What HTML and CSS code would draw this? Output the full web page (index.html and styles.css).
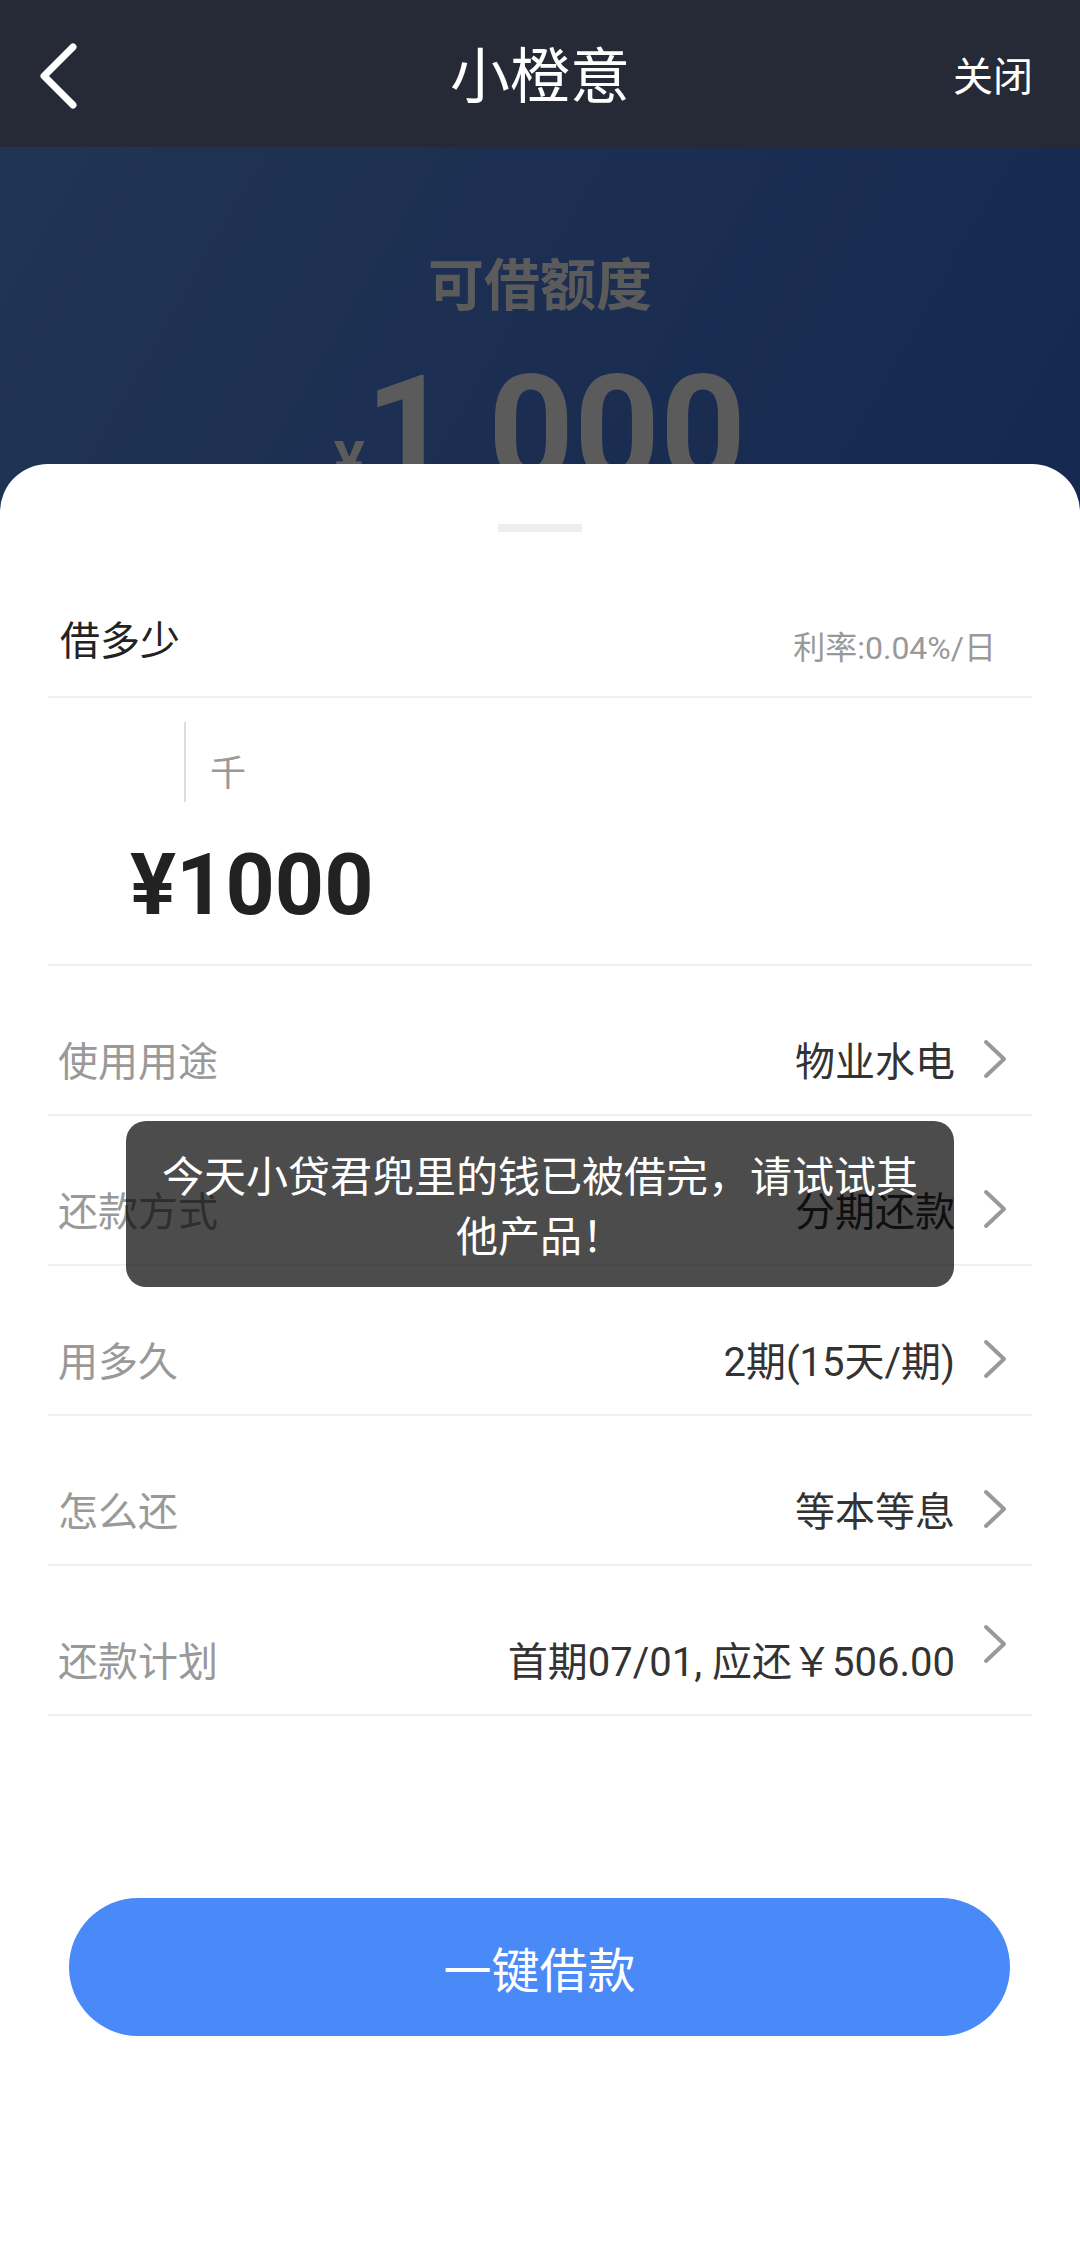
FILE: index.html
```html
<!DOCTYPE html>
<html lang="zh-CN">
<head>
<meta charset="utf-8">
<title>小橙意</title>
<link rel="stylesheet" href="styles.css">
</head>
<body>
<div class="page">
  <header class="topbar">
    <svg class="back" width="40" height="66" viewBox="0 0 40 66"><polyline points="35,4 6,33 35,62" fill="none" stroke="#ffffff" stroke-width="7" stroke-linecap="round" stroke-linejoin="round"/></svg>
    <div class="title">小橙意</div>
    <div class="close">关闭</div>
  </header>

  <section class="hero">
    <div class="hero-label">可借额度</div>
    <div class="hero-amount"><span class="hero-yen">¥</span><span class="hero-num">1,000</span></div>
  </section>

  <section class="card">
    <div class="handle"></div>
    <div class="head-row">
      <span class="head-label">借多少</span>
      <span class="rate">利率:0.04%/日</span>
    </div>
    <div class="amount-box">
      <div class="unit-line">
        <span class="cursor"></span>
        <span class="unit">千</span>
      </div>
      <div class="big-amount">¥1000</div>
    </div>

    <div class="row">
      <span class="label">使用用途</span>
      <span class="value">物业水电</span>
      <svg class="chev" width="26" height="42" viewBox="0 0 26 42"><polyline points="4,4 22,21 4,38" fill="none" stroke="#999999" stroke-width="4" stroke-linecap="round" stroke-linejoin="round"/></svg>
    </div>
    <div class="row">
      <span class="label">还款方式</span>
      <span class="value">分期还款</span>
      <svg class="chev" width="26" height="42" viewBox="0 0 26 42"><polyline points="4,4 22,21 4,38" fill="none" stroke="#999999" stroke-width="4" stroke-linecap="round" stroke-linejoin="round"/></svg>
    </div>
    <div class="row">
      <span class="label">用多久</span>
      <span class="value">2期(15天/期)</span>
      <svg class="chev" width="26" height="42" viewBox="0 0 26 42"><polyline points="4,4 22,21 4,38" fill="none" stroke="#999999" stroke-width="4" stroke-linecap="round" stroke-linejoin="round"/></svg>
    </div>
    <div class="row">
      <span class="label">怎么还</span>
      <span class="value">等本等息</span>
      <svg class="chev" width="26" height="42" viewBox="0 0 26 42"><polyline points="4,4 22,21 4,38" fill="none" stroke="#999999" stroke-width="4" stroke-linecap="round" stroke-linejoin="round"/></svg>
    </div>
    <div class="row">
      <span class="label">还款计划</span>
      <span class="value">首期07/01, 应还￥506.00</span>
      <svg class="chev chev-up" width="26" height="42" viewBox="0 0 26 42"><polyline points="4,4 22,21 4,38" fill="none" stroke="#999999" stroke-width="4" stroke-linecap="round" stroke-linejoin="round"/></svg>
    </div>

    <button class="submit">一键借款</button>
  </section>

  <div class="toast">今天小贷君兜里的钱已被借完，请试试其他产品！</div>
</div>
</body>
</html>
```

FILE: styles.css
```css
* { box-sizing: border-box; }
html, body { margin: 0; padding: 0; }
body {
  width: 1080px;
  height: 2258px;
  background: #ffffff;
  font-family: Roboto, "Noto Sans CJK SC", sans-serif;
  overflow: hidden;
}
.page {
  position: relative;
  width: 1080px;
  height: 2258px;
  background: #ffffff;
}

/* top bar */
.topbar {
  height: 147px;
  background: #262936;
  display: flex;
  align-items: center;
  justify-content: space-between;
  padding: 0 47px 0 38px;
  position: relative;
}
.back { display: block; margin-top: 4px; }
.title {
  position: absolute;
  left: 0;
  right: 0;
  text-align: center;
  color: #ffffff;
  font-size: 60px;
  line-height: 60px;
  top: 48px;
  pointer-events: none;
}
.close {
  color: #ffffff;
  font-size: 40px;
  line-height: 40px;
  margin-top: 8px;
}

/* hero */
.hero {
  height: 367px;
  overflow: hidden;
  background: linear-gradient(120deg, #203453 0%, #1c2f52 45%, #15284f 100%);
  padding-top: 111px;
  text-align: center;
}
.hero-label {
  color: #5b5b5b;
  font-size: 56px;
  line-height: 56px;
  font-weight: 700;
}
.hero-amount {
  margin-top: 42px;
  color: #5b5b5b;
  font-weight: 700;
  line-height: 150px;
  white-space: nowrap;
}
.hero-yen { font-size: 58px; }
.hero-num { font-size: 150px; }

/* card */
.card {
  position: relative;
  z-index: 1;
  margin-top: -50px;
  background: #ffffff;
  border-radius: 48px 48px 0 0;
  padding: 60px 48px 0 48px;
}
.handle {
  width: 84px;
  height: 8px;
  background: #eeeeee;
  margin: 0 auto;
}
.head-row {
  height: 166px;
  padding: 48px 36px 0 12px;
  display: flex;
  align-items: center;
  justify-content: space-between;
  border-bottom: 2px solid #f0f0f0;
}
.head-label {
  font-size: 40px;
  color: #222222;
}
.rate {
  font-size: 32px;
  color: #999999;
  padding-top: 14px;
}

.amount-box {
  padding: 24px 0 36px 0;
  border-bottom: 2px solid #f0f0f0;
}
.unit-line {
  display: flex;
  align-items: center;
  margin-left: 136px;
  height: 80px;
}
.cursor {
  width: 2px;
  height: 80px;
  background: #dddddd;
}
.unit {
  margin-left: 24px;
  font-size: 36px;
  color: #999999;
  padding-top: 16px;
}
.big-amount {
  margin-top: 40px;
  margin-left: 82px;
  font-size: 86px;
  line-height: 86px;
  font-weight: 700;
  color: #222222;
}

.row {
  height: 150px;
  padding: 38px 24px 0 10px;
  display: flex;
  align-items: center;
  border-bottom: 2px solid #f0f0f0;
}
.label {
  font-size: 40px;
  color: #999999;
  flex: 1;
}
.value {
  font-size: 40px;
  color: #333333;
}
.chev {
  display: block;
  margin-left: 27px;
  flex-shrink: 0;
}
.chev-up { margin-bottom: 30px; }

.submit {
  display: block;
  width: 941px;
  height: 138px;
  margin: 182px 0 0 21px;
  border: none;
  border-radius: 69px;
  background: #4a89f8;
  color: #ffffff;
  font-family: Roboto, "Noto Sans CJK SC", sans-serif;
  font-size: 48px;
  padding: 0;
}

/* toast */
.toast {
  position: absolute;
  left: 126px;
  top: 1121px;
  width: 828px;
  padding: 23px 34px;
  background: rgba(0, 0, 0, 0.7);
  border-radius: 20px;
  color: #ffffff;
  font-family: "Noto Sans CJK SC", sans-serif;
  font-size: 42px;
  line-height: 60px;
  text-align: center;
  z-index: 5;
}
```
